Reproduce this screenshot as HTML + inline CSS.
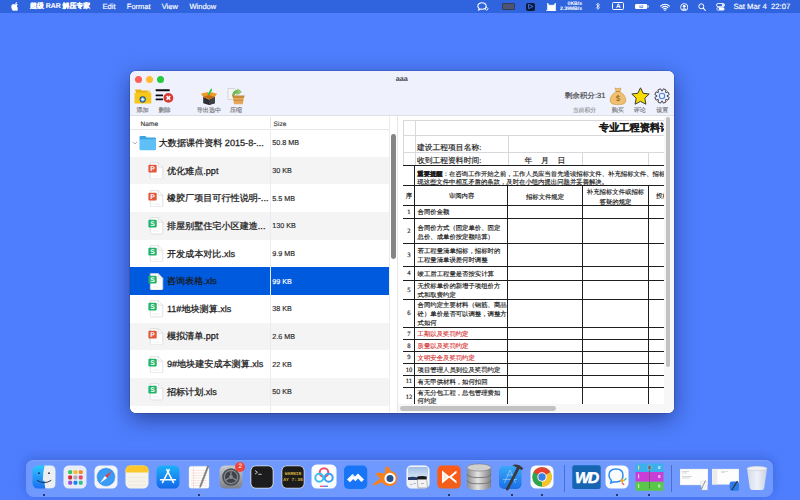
<!DOCTYPE html>
<html><head><meta charset="utf-8">
<style>
*{margin:0;padding:0;box-sizing:border-box}
html,body{width:800px;height:500px;overflow:hidden}
body{background:#4e7efe;font-family:"Liberation Sans",sans-serif;position:relative;text-rendering:geometricPrecision}
.abs{position:absolute}
#menubar{position:absolute;left:0;top:0;width:800px;height:13.4px;background:#2f64de;color:#fff;font-size:8.3px}
#menubar .mi{position:absolute;top:2px;line-height:9px;white-space:nowrap;-webkit-text-stroke:.15px #fff}
#win{position:absolute;left:130px;top:71px;width:544px;height:341.6px;border-radius:6px;background:#fff;overflow:hidden;
 box-shadow:0 6px 22px rgba(0,0,40,.45),0 0 0 .5px rgba(0,0,0,.25)}
#toolbar{position:absolute;left:0;top:0;width:544px;height:44.6px;background:#eff2fc;border-bottom:.8px solid #dcdee8;z-index:3}
.tl{position:absolute;top:5px;width:7px;height:7px;border-radius:50%}
#title{position:absolute;left:265.8px;top:2.8px;font-size:7.2px;font-weight:bold;color:#3c3c46}
.tlab{position:absolute;top:35px;font-size:6.1px;color:#75757b;white-space:nowrap;-webkit-text-stroke:.15px #75757b}
#left{position:absolute;left:0;top:44px;width:267.6px;height:297.6px;background:#fff;overflow:hidden}
#hdr{position:absolute;left:0;top:0;width:259px;height:14.5px;border-bottom:.8px solid #e6e6e8;font-size:6.6px;color:#3a3a3e;-webkit-text-stroke:.15px #3a3a3e}
.row{position:absolute;left:0;width:258.6px;height:27.65px}
.row.g{background:#f4f4f5}
.row.sel{background:#005ade}
.nm{position:absolute;left:37px;top:7.8px;font-size:9.1px;color:#1a1a1a;white-space:nowrap;-webkit-text-stroke:.25px #1a1a1a}
.sz{position:absolute;left:142.3px;top:9.3px;font-size:7.2px;color:#2a2a2a;white-space:nowrap;-webkit-text-stroke:.15px #2a2a2a}
.sel .sz{color:#fff;-webkit-text-stroke:.15px #fff}
#right{position:absolute;left:267.6px;top:44px;width:276.4px;height:297.6px;background:#fff;overflow:hidden}
.sx{position:absolute;font-family:"Liberation Serif",serif;color:#1a1a1a;white-space:nowrap;line-height:1.2;-webkit-text-stroke:.15px #1a1a1a}
#dockbg{position:absolute;left:26px;top:460px;width:747px;height:37px;border-radius:8px;background:rgba(125,165,255,.7);box-shadow:0 -2px 12px rgba(0,20,90,.22),inset 0 .6px 0 rgba(255,255,255,.25)}
</style></head><body>
<div id="menubar">
 <svg class="abs" style="left:10.5px;top:1.8px" width="8" height="9" viewBox="0 0 170 200"><path fill="#fff" d="M150.4 172.3c-8.3 12.4-17.1 24.500-30.500 24.700-13.400.2-17.700-7.900-33-7.900-15.300 0-20.100 7.700-32.800 8.100-13.100.5-23.100-13.200-31.500-25.500C5.500 146.400-7.500 101.100 10 70.800 18.700 55.700 34.200 46.200 51 46c12.800-.2 24.900 8.600 32.800 8.600 7.800 0 19.400-10.700 32.700-9.100 5.600.2 21.200 2.200 31.200 16.900-.8.500-18.600 10.900-18.400 32.500.2 25.800 22.600 34.400 22.900 34.500-.2.600-3.600 12.300-11.800 24.300M101.600 15.500C108.600 7 120.400.7 130.100.2c1.200 11.400-3.300 22.900-10.100 31.100-6.700 8.300-17.800 14.700-28.600 13.900-1.500-11.200 4-22.900 10.200-29.700"/></svg>
 <div class="mi" style="left:30px;font-weight:bold;font-size:6.9px;top:2.4px">超级 RAR 解压专家</div>
 <div class="mi" style="left:102.5px;font-size:7.6px">Edit</div>
 <div class="mi" style="left:126.8px;font-size:7.5px">Format</div>
 <div class="mi" style="left:161.7px;font-size:7.5px">View</div>
 <div class="mi" style="left:189.5px;font-size:7.5px">Window</div>
 <!-- right icons -->
 <svg class="abs" style="left:476.5px;top:2px" width="12" height="9" viewBox="0 0 12 9"><path d="M5 .8C2.6.8.8 2.3.8 4.1c0 1 .5 1.800 1.300 2.400L1.700 8 3.600 7.100c.5.100.9.200 1.400.2 2.400 0 4.200-1.500 4.200-3.300S7.400.8 5 .8z" fill="none" stroke="#fff" stroke-width="1.1"/><path d="M9.6 5.200l1.600 1.600-1.600 1.600-1.600-1.600z" fill="none" stroke="#fff" stroke-width=".9"/></svg>
 <div class="abs" style="left:502px;top:2.5px;width:12.5px;height:7.3px;background:#4d5572;border:.7px solid #353c55;border-radius:1px"></div>
 <div class="abs" style="left:525.6px;top:2.5px;width:9.4px;height:8px;background:#0d1a3a;border-radius:2px"><svg class="abs" style="left:2px;top:1.5px" width="6" height="5" viewBox="0 0 6 5"><path d="M.5.3L5 2.5.5 4.700z" fill="none" stroke="#3f7de8" stroke-width=".9"/></svg></div>
 <svg class="abs" style="left:545.5px;top:2.6px" width="11" height="8" viewBox="0 0 11 8"><path d="M1.500 0 3.200 2.200H7.800L9.500 0V8H1.500zM.500 8H10.500" fill="#fff" stroke="#fff" stroke-width=".6"/><path d="M.800 6.800Q0 7.600.700 8" stroke="#fff" fill="none" stroke-width=".8"/></svg>
 <div class="abs" style="left:552px;top:1.8px;font-size:5.1px;line-height:4.9px;text-align:right;width:30px;color:#fff;font-weight:bold">0KB/s<br>2.39MB/s</div>
 <svg class="abs" style="left:594.5px;top:2.3px" width="6" height="8.5" viewBox="0 0 6 9"><path d="M1 2.300 4.600 6 2.800 7.800V1.200L4.600 3 1 6.700" fill="none" stroke="#fff" stroke-width=".8"/></svg>
 <div class="abs" style="left:612.3px;top:2.4px;width:12px;height:7.8px;border:.9px solid #fff;border-radius:1.5px;color:#fff;font-size:6.3px;line-height:7.4px;text-align:center;font-weight:bold">A</div>
 <svg class="abs" style="left:635px;top:4.2px" width="14" height="5" viewBox="0 0 14 5"><rect x="0" y="0" width="12.2" height="5" rx="1.200" fill="#fff"/><rect x="12.600" y="1.500" width="1" height="2" fill="#fff"/><text x="6" y="4" font-size="3.800" text-anchor="middle" fill="#3166e0" font-family="Liberation Sans" font-weight="bold">52</text></svg>
 <svg class="abs" style="left:660px;top:2.8px" width="10" height="8" viewBox="0 0 10 8"><path d="M.6 3.100A6.200 6.200 0 0 1 9.400 3.100M2.100 4.600A4 4 0 0 1 7.900 4.600M3.600 6A1.900 1.900 0 0 1 6.400 6" fill="none" stroke="#fff" stroke-width="1.100" stroke-linecap="round"/><circle cx="5" cy="7.200" r=".8" fill="#fff"/></svg>
 <svg class="abs" style="left:679.8px;top:2.800px" width="8.400" height="8.400" viewBox="0 0 10 10"><circle cx="5" cy="5" r="4.300" fill="none" stroke="#fff" stroke-width="1.100"/><circle cx="5" cy="4" r="1.700" fill="#fff"/><path d="M2 8Q5 4.800 8 8" fill="#fff"/></svg>
 <svg class="abs" style="left:697.5px;top:3px" width="8" height="8" viewBox="0 0 8 8"><circle cx="3.300" cy="3.300" r="2.500" fill="none" stroke="#fff" stroke-width="1"/><path d="M5.200 5.200 7.300 7.300" stroke="#fff" stroke-width="1.100" stroke-linecap="round"/></svg>
 <svg class="abs" style="left:715.5px;top:2.500px" width="9" height="8" viewBox="0 0 9 8"><rect x=".5" y=".5" width="8" height="3.200" rx="1.600" fill="none" stroke="#fff" stroke-width=".9"/><circle cx="6.900" cy="2.100" r="1.100" fill="#fff"/><rect x=".5" y="4.300" width="8" height="3.200" rx="1.600" fill="#fff"/><circle cx="2.100" cy="5.900" r="1" fill="#3166e0"/></svg>
 <div class="mi" style="left:733.4px;font-size:7.7px;white-space:pre">Sat Mar 4  22:07</div>
</div>
<div id="win">
 <div id="toolbar">
  <div class="tl" style="left:4.5px;background:#fe5f57"></div>
  <div class="tl" style="left:15.5px;background:#febc2e"></div>
  <div class="tl" style="left:26.5px;background:#28c840"></div>
  <div id="title">aaa</div>
  <svg class="abs" style="left:3.5px;top:16.5px" width="18" height="16" viewBox="0 0 18 16">
   <path d="M1 2.300Q1 1.500 1.800 1.500H6.500L7.600 2.600H15.500V5H1z" fill="#e8b10e"/>
   <path d="M.5 4.500H16.800Q17.300 4.500 17.300 5V15Q17.300 15.600 16.700 15.600H1.100Q.5 15.600 .5 15z" fill="#f7c81c"/>
   <path d="M1.500 2.800V5.200M14.200 2.600V4.600" stroke="#f4f0e0" stroke-width=".9"/>
   <circle cx="8.700" cy="11.400" r="3.100" fill="#21477a"/>
   <circle cx="8.700" cy="11.400" r="2.200" fill="#6ab7f2"/>
   <path d="M8.700 9.900V12.900M7.200 11.400H10.200" stroke="#fff" stroke-width=".9"/>
  </svg>
  <svg class="abs" style="left:25px;top:17px" width="19" height="15" viewBox="0 0 19 15">
   <rect x=".6" y="1.300" width="14.200" height="1.900" rx=".6" fill="#0c0c0c"/>
   <rect x=".6" y="6.400" width="7.500" height="1.900" rx=".6" fill="#0c0c0c"/>
   <rect x=".6" y="10.400" width="7.500" height="1.900" rx=".6" fill="#0c0c0c"/>
   <circle cx="13.400" cy="9.900" r="4.900" fill="#d93a35"/>
   <path d="M11.600 8.100 15.200 11.700M15.200 8.100 11.600 11.700" stroke="#fff" stroke-width="1.500"/>
  </svg>
  <svg class="abs" style="left:69.5px;top:15.5px" width="18" height="18" viewBox="0 0 18 18">
   <path d="M3.200 9.800 9 12.500 14.800 9.800V16.200L9 18 3.200 16.200z" fill="#2c2f33"/>
   <path d="M9 12.500V18L14.800 16.200V9.800z" fill="#3d4046"/>
   <path d="M.8 6.700 7.500 5 9 6.500 10.500 5 17.200 6.700 14.800 9.800 9 12.500 3.200 9.800z" fill="#f09a2a"/>
   <path d="M3.200 9.800 9 12.500 14.800 9.800 9 8z" fill="#c56c14"/>
   <path d="M7.600 7.500 10.400 2.400 11.800 1.200 12 3 9.400 8.200z" fill="#2fc24a"/>
   <path d="M10.400 2.400 11.800 1.200" stroke="#9ef0a8" stroke-width=".7"/>
  </svg>
  <svg class="abs" style="left:97px;top:16px" width="19" height="18" viewBox="0 0 19 18">
   <path d="M1 1.500H7.500L9.500 3.500V12.500H1z" fill="#f5f5f2" stroke="#c8c8c8" stroke-width=".7"/>
   <path d="M5 9Q5.500 2.500 11.500 2.800L13.800 4.500 12 7Q8.500 5.500 7 9z" fill="#73b55a"/>
   <path d="M10.500 1.200 15 5 10.300 8.200z" fill="#8cc86e"/>
   <path d="M5 8.500H17.800L16.800 11H6z" fill="#c98a3a"/>
   <path d="M6 11H16.800L15.800 17.300H7z" fill="#e5a85a"/>
   <path d="M6.500 13.300H16.200" stroke="#b97c2e" stroke-width=".7"/>
  </svg>
  <div class="tlab" style="left:6.5px">添加</div>
  <div class="tlab" style="left:28.5px">删除</div>
  <div class="tlab" style="left:66.7px">导出选中</div>
  <div class="tlab" style="left:100px">压缩</div>
  <div class="abs" style="left:434.7px;top:20.3px;font-size:7.55px;color:#4a4a50;white-space:nowrap;-webkit-text-stroke:.2px #4a4a50">剩余积分:31</div>
  <div class="tlab" style="left:442.7px;font-size:5.9px;color:#8a8a90;-webkit-text-stroke:.1px #8a8a90">当前积分</div>
  <svg class="abs" style="left:478.5px;top:15.8px" width="18" height="18" viewBox="0 0 18 18">
   <path d="M6 1Q9 2.200 12 1L11 4.500H7z" fill="#f0c070" stroke="#c89848" stroke-width=".6"/>
   <path d="M7 4.500H11Q17.500 9 16.800 14Q16.300 17.400 12 17.500H6Q1.700 17.400 1.200 14Q.5 9 7 4.500z" fill="#f0c070" stroke="#c89848" stroke-width=".6"/>
   <path d="M7 4.500H11" stroke="#b88838" stroke-width=".9"/>
   <text x="9" y="14.300" font-size="8" text-anchor="middle" fill="#8a5a1a" font-family="Liberation Sans">$</text>
  </svg>
  <svg class="abs" style="left:500.5px;top:16px" width="19" height="18" viewBox="0 0 19 18">
   <path d="M9.500 .8 12.200 6.300 18.200 7 13.800 11.200 14.900 17.200 9.500 14.300 4.100 17.200 5.200 11.200.8 7 6.800 6.300z" fill="#fbdc00" stroke="#3a3a3a" stroke-width="1" stroke-linejoin="round"/>
  </svg>
  <svg class="abs" style="left:524.3px;top:16.6px" width="16" height="16" viewBox="0 0 16 16">
   <path d="M13.09 8.32 L15.18 9.33 L14.01 12.14 L11.83 11.37 L11.37 11.83 L12.14 14.01 L9.33 15.18 L8.32 13.09 L7.68 13.09 L6.67 15.18 L3.86 14.01 L4.63 11.83 L4.17 11.37 L1.99 12.14 L0.82 9.33 L2.91 8.32 L2.91 7.68 L0.82 6.67 L1.99 3.86 L4.17 4.63 L4.63 4.17 L3.86 1.99 L6.67 0.82 L7.68 2.91 L8.32 2.91 L9.33 0.82 L12.14 1.99 L11.37 4.17 L11.83 4.63 L14.01 3.86 L15.18 6.67 L13.09 7.68z" fill="none" stroke="#46464a" stroke-width="1" stroke-linejoin="round"/>
   <circle cx="8" cy="8" r="2.700" fill="none" stroke="#4a88ea" stroke-width="1.100"/>
  </svg>
  <div class="tlab" style="left:481.7px">购买</div>
  <div class="tlab" style="left:503.7px">评论</div>
  <div class="tlab" style="left:526.2px">设置</div>
 </div>
 <div id="left">
  <div id="hdr"><div class="abs" style="left:10.6px;top:5.9px">Name</div><div class="abs" style="left:143.6px;top:5.9px">Size</div><div class="abs" style="left:140px;top:2px;width:.8px;height:11px;background:#e4e4e6"></div></div>
  <div class="abs" style="left:140px;top:13.8px;width:.8px;height:290px;background:#ececee;z-index:1"></div>
  <div class="row" style="top:14.15px"><svg class="abs" style="left:2px;top:11.5px" width="6" height="4" viewBox="0 0 6 4"><path d="M.8.8 3 3 5.200.8" fill="none" stroke="#a0a0a6" stroke-width=".8"/></svg><svg class="abs" style="left:9px;top:5.5px" width="17.5" height="16" viewBox="0 0 17.5 16"><path d="M.5 2.300Q.5 1 1.800 1H6.300L7.800 2.500H15.700Q17 2.500 17 3.800V5H.5z" fill="#3aa4e0"/><path d="M.5 4.300H17V14.200Q17 15.300 15.800 15.300H1.700Q.5 15.300 .5 14.200z" fill="#5ec0f6"/></svg><div class="nm" style="left:28.7px">大数据课件资料 2015-8-...</div><div class="sz">50.8 MB</div></div>
  <div class="row g" style="top:41.80px"><svg class="abs" style="left:18px;top:5.2px" width="15.5" height="17.5" viewBox="0 0 15.5 17.5"><path d="M2.300.6H10.200L14.800 5.200V15.600Q14.800 16.900 13.500 16.900H3.500Q2.300 16.900 2.300 15.600z" fill="#fff" stroke="#d6d6d8" stroke-width=".7"/><path d="M10.200.6V4Q10.200 5.200 11.400 5.200H14.800" fill="none" stroke="#d6d6d8" stroke-width=".7"/><path d="M5 14H11.500" stroke="#e4e4e6" stroke-width=".6"/><rect x=".4" y="2.700" width="8.300" height="7.800" rx="1" fill="#e2583a"/><text x="4.550" y="9" font-size="6.800" font-weight="bold" text-anchor="middle" fill="#fff" font-family="Liberation Sans">P</text></svg><div class="nm" style="left:36.9px">优化难点.ppt</div><div class="sz">30 KB</div></div>
  <div class="row" style="top:69.45px"><svg class="abs" style="left:18px;top:5.2px" width="15.5" height="17.5" viewBox="0 0 15.5 17.5"><path d="M2.300.6H10.200L14.800 5.200V15.600Q14.800 16.900 13.500 16.900H3.500Q2.300 16.900 2.300 15.600z" fill="#fff" stroke="#d6d6d8" stroke-width=".7"/><path d="M10.200.6V4Q10.200 5.200 11.400 5.200H14.800" fill="none" stroke="#d6d6d8" stroke-width=".7"/><path d="M5 14H11.500" stroke="#e4e4e6" stroke-width=".6"/><rect x=".4" y="2.700" width="8.300" height="7.800" rx="1" fill="#e2583a"/><text x="4.550" y="9" font-size="6.800" font-weight="bold" text-anchor="middle" fill="#fff" font-family="Liberation Sans">P</text></svg><div class="nm" style="left:36.9px">橡胶厂项目可行性说明-...</div><div class="sz">5.5 MB</div></div>
  <div class="row g" style="top:97.10px"><svg class="abs" style="left:18px;top:5.2px" width="15.5" height="17.5" viewBox="0 0 15.5 17.5"><path d="M2.300.6H10.200L14.800 5.200V15.600Q14.800 16.900 13.500 16.900H3.500Q2.300 16.900 2.300 15.600z" fill="#fff" stroke="#d6d6d8" stroke-width=".7"/><path d="M10.200.6V4Q10.200 5.200 11.400 5.200H14.800" fill="none" stroke="#d6d6d8" stroke-width=".7"/><path d="M5 14H11.500" stroke="#e4e4e6" stroke-width=".6"/><rect x=".4" y="2.700" width="8.300" height="7.800" rx="1" fill="#22b26a"/><text x="4.550" y="9" font-size="6.800" font-weight="bold" text-anchor="middle" fill="#fff" font-family="Liberation Sans">S</text></svg><div class="nm" style="left:36.9px">排屋别墅住宅小区建造...</div><div class="sz">130 KB</div></div>
  <div class="row" style="top:124.75px"><svg class="abs" style="left:18px;top:5.2px" width="15.5" height="17.5" viewBox="0 0 15.5 17.5"><path d="M2.300.6H10.200L14.800 5.200V15.600Q14.800 16.900 13.500 16.900H3.500Q2.300 16.900 2.300 15.600z" fill="#fff" stroke="#d6d6d8" stroke-width=".7"/><path d="M10.200.6V4Q10.200 5.200 11.400 5.200H14.800" fill="none" stroke="#d6d6d8" stroke-width=".7"/><path d="M5 14H11.500" stroke="#e4e4e6" stroke-width=".6"/><rect x=".4" y="2.700" width="8.300" height="7.800" rx="1" fill="#22b26a"/><text x="4.550" y="9" font-size="6.800" font-weight="bold" text-anchor="middle" fill="#fff" font-family="Liberation Sans">S</text></svg><div class="nm" style="left:36.9px">开发成本对比.xls</div><div class="sz">9.9 MB</div></div>
  <div class="row sel" style="top:152.40px"><svg class="abs" style="left:18px;top:5.2px" width="15.5" height="17.5" viewBox="0 0 15.5 17.5"><path d="M2.300.6H10.200L14.800 5.200V15.600Q14.800 16.900 13.500 16.900H3.500Q2.300 16.900 2.300 15.600z" fill="#fff" stroke="#d6d6d8" stroke-width=".7"/><path d="M10.200.6V4Q10.200 5.200 11.400 5.200H14.800" fill="none" stroke="#d6d6d8" stroke-width=".7"/><path d="M5 14H11.500" stroke="#e4e4e6" stroke-width=".6"/><rect x=".4" y="2.700" width="8.300" height="7.800" rx="1" fill="#22b26a"/><text x="4.550" y="9" font-size="6.800" font-weight="bold" text-anchor="middle" fill="#fff" font-family="Liberation Sans">S</text></svg><div class="nm" style="left:36.9px">咨询表格.xls</div><div class="sz">99 KB</div></div>
  <div class="row" style="top:180.05px"><svg class="abs" style="left:18px;top:5.2px" width="15.5" height="17.5" viewBox="0 0 15.5 17.5"><path d="M2.300.6H10.200L14.800 5.200V15.600Q14.800 16.900 13.500 16.900H3.500Q2.300 16.900 2.300 15.600z" fill="#fff" stroke="#d6d6d8" stroke-width=".7"/><path d="M10.200.6V4Q10.200 5.200 11.400 5.200H14.800" fill="none" stroke="#d6d6d8" stroke-width=".7"/><path d="M5 14H11.500" stroke="#e4e4e6" stroke-width=".6"/><rect x=".4" y="2.700" width="8.300" height="7.800" rx="1" fill="#22b26a"/><text x="4.550" y="9" font-size="6.800" font-weight="bold" text-anchor="middle" fill="#fff" font-family="Liberation Sans">S</text></svg><div class="nm" style="left:36.9px">11#地块测算.xls</div><div class="sz">38 KB</div></div>
  <div class="row g" style="top:207.70px"><svg class="abs" style="left:18px;top:5.2px" width="15.5" height="17.5" viewBox="0 0 15.5 17.5"><path d="M2.300.6H10.200L14.800 5.200V15.600Q14.800 16.900 13.500 16.900H3.500Q2.300 16.900 2.300 15.600z" fill="#fff" stroke="#d6d6d8" stroke-width=".7"/><path d="M10.200.6V4Q10.200 5.200 11.400 5.200H14.800" fill="none" stroke="#d6d6d8" stroke-width=".7"/><path d="M5 14H11.500" stroke="#e4e4e6" stroke-width=".6"/><rect x=".4" y="2.700" width="8.300" height="7.800" rx="1" fill="#e2583a"/><text x="4.550" y="9" font-size="6.800" font-weight="bold" text-anchor="middle" fill="#fff" font-family="Liberation Sans">P</text></svg><div class="nm" style="left:36.9px">模拟清单.ppt</div><div class="sz">2.6 MB</div></div>
  <div class="row" style="top:235.35px"><svg class="abs" style="left:18px;top:5.2px" width="15.5" height="17.5" viewBox="0 0 15.5 17.5"><path d="M2.300.6H10.200L14.800 5.200V15.600Q14.800 16.900 13.500 16.900H3.500Q2.300 16.900 2.300 15.600z" fill="#fff" stroke="#d6d6d8" stroke-width=".7"/><path d="M10.200.6V4Q10.200 5.200 11.400 5.200H14.800" fill="none" stroke="#d6d6d8" stroke-width=".7"/><path d="M5 14H11.500" stroke="#e4e4e6" stroke-width=".6"/><rect x=".4" y="2.700" width="8.300" height="7.800" rx="1" fill="#22b26a"/><text x="4.550" y="9" font-size="6.800" font-weight="bold" text-anchor="middle" fill="#fff" font-family="Liberation Sans">S</text></svg><div class="nm" style="left:36.9px">9#地块建安成本测算.xls</div><div class="sz">22 KB</div></div>
  <div class="row g" style="top:263.00px"><svg class="abs" style="left:18px;top:5.2px" width="15.5" height="17.5" viewBox="0 0 15.5 17.5"><path d="M2.300.6H10.200L14.800 5.200V15.600Q14.800 16.900 13.500 16.900H3.500Q2.300 16.900 2.300 15.600z" fill="#fff" stroke="#d6d6d8" stroke-width=".7"/><path d="M10.200.6V4Q10.200 5.200 11.400 5.200H14.800" fill="none" stroke="#d6d6d8" stroke-width=".7"/><path d="M5 14H11.500" stroke="#e4e4e6" stroke-width=".6"/><rect x=".4" y="2.700" width="8.300" height="7.800" rx="1" fill="#22b26a"/><text x="4.550" y="9" font-size="6.800" font-weight="bold" text-anchor="middle" fill="#fff" font-family="Liberation Sans">S</text></svg><div class="nm" style="left:36.9px">招标计划.xls</div><div class="sz">50 KB</div></div>
  <div class="row" style="top:290.65px"></div>
  <div class="abs" style="left:258.6px;top:0;width:.7px;height:297px;background:#ececee"></div>
  <div class="abs" style="left:260.8px;top:18.6px;width:4.8px;height:125.2px;border-radius:2.4px;background:#858587"></div>
 </div>
 <div class="abs" style="left:266.6px;top:44px;width:.8px;height:297px;background:#e6e6e8;z-index:2"></div>
 <div id="right">
  <div id="sheet" class="abs" style="left:5.4px;top:5.1px;width:261px;height:283.6px;overflow:hidden"><div class="abs" style="left:0px;top:-0.40px;width:300.00px;height:0.8px;background:#d8d8dc"></div>
<div class="abs" style="left:0px;top:14.90px;width:300.00px;height:0.8px;background:#d8d8dc"></div>
<div class="abs" style="left:0px;top:32.00px;width:300.00px;height:0.8px;background:#d8d8dc"></div>
<div class="abs" style="left:-0.40px;top:0px;width:0.8px;height:45.90px;background:#d8d8dc"></div>
<div class="abs" style="left:11.60px;top:0px;width:0.8px;height:45.90px;background:#d8d8dc"></div>
<div class="abs" style="left:104.60px;top:15.3px;width:0.8px;height:30.60px;background:#d8d8dc"></div>
<div class="abs" style="left:179.20px;top:32.4px;width:0.8px;height:13.50px;background:#d8d8dc"></div>
<div class="abs" style="left:244.80px;top:32.4px;width:0.8px;height:13.50px;background:#d8d8dc"></div>
<div class="abs" style="left:0px;top:45.40px;width:300.00px;height:1px;background:#1e1e1e"></div>
<div class="abs" style="left:0px;top:65.40px;width:300.00px;height:1px;background:#1e1e1e"></div>
<div class="abs" style="left:0px;top:84.50px;width:300.00px;height:1px;background:#1e1e1e"></div>
<div class="abs" style="left:0px;top:97.80px;width:300.00px;height:1px;background:#1e1e1e"></div>
<div class="abs" style="left:0px;top:123.40px;width:300.00px;height:1px;background:#1e1e1e"></div>
<div class="abs" style="left:0px;top:145.80px;width:300.00px;height:1px;background:#1e1e1e"></div>
<div class="abs" style="left:0px;top:159.80px;width:300.00px;height:1px;background:#1e1e1e"></div>
<div class="abs" style="left:0px;top:178.50px;width:300.00px;height:1px;background:#1e1e1e"></div>
<div class="abs" style="left:0px;top:207.00px;width:300.00px;height:1px;background:#1e1e1e"></div>
<div class="abs" style="left:0px;top:219.20px;width:300.00px;height:1px;background:#1e1e1e"></div>
<div class="abs" style="left:0px;top:230.80px;width:300.00px;height:1px;background:#1e1e1e"></div>
<div class="abs" style="left:0px;top:242.90px;width:300.00px;height:1px;background:#1e1e1e"></div>
<div class="abs" style="left:0px;top:254.90px;width:300.00px;height:1px;background:#1e1e1e"></div>
<div class="abs" style="left:0px;top:266.80px;width:300.00px;height:1px;background:#1e1e1e"></div>
<div class="abs" style="left:-0.50px;top:45.9px;width:1px;height:254.10px;background:#1e1e1e"></div>
<div class="abs" style="left:11.50px;top:45.9px;width:1px;height:254.10px;background:#1e1e1e"></div>
<div class="abs" style="left:104.50px;top:65.9px;width:1px;height:234.10px;background:#1e1e1e"></div>
<div class="abs" style="left:179.10px;top:65.9px;width:1px;height:234.10px;background:#1e1e1e"></div>
<div class="abs" style="left:244.70px;top:65.9px;width:1px;height:234.10px;background:#1e1e1e"></div>
<div class="sx" style="left:196px;top:2.68px;font-size:10.2px;font-weight:bold">专业工程资料计划表</div>
<div class="sx" style="left:13.9px;top:22.52px;font-size:7.8px;">建设工程项目名称:</div>
<div class="sx" style="left:13.9px;top:36.22px;font-size:7.8px;">收到工程资料时间:</div>
<div class="sx" style="left:121.6px;top:36.3px;font-size:7.8px;letter-spacing:8.7px">年月日</div>
<div class="sx" style="left:14.3px;top:50.68px;font-size:6.36px;"><b>重要提醒</b>：在咨询工作开始之前，工作人员应当首先通读招标文件、补充招标文件、招标答疑</div>
<div class="sx" style="left:14.3px;top:58.88px;font-size:6.36px;">现这些文件中相互矛盾的条款，及时在小组内提出问题并妥善解决。</div>
<div class="sx" style="left:-54px;width:120px;text-align:center;top:73.18px;font-size:6.36px;">序</div>
<div class="sx" style="left:-1.3999999999999986px;width:120px;text-align:center;top:73.18px;font-size:6.36px;">审阅内容</div>
<div class="sx" style="left:82px;width:120px;text-align:center;top:73.48px;font-size:6.36px;">招标文件规定</div>
<div class="sx" style="left:152.5px;width:120px;text-align:center;top:69.08px;font-size:6.36px;">补充招标文件或招标</div>
<div class="sx" style="left:152.5px;width:120px;text-align:center;top:78.48px;font-size:6.36px;">答疑的规定</div>
<div class="sx" style="left:253.2px;top:73.18px;font-size:6.36px;">投标文件</div>
<div class="sx" style="left:-54px;width:120px;text-align:center;top:88.69px;font-size:6.6px;">1</div>
<div class="sx" style="left:14.6px;top:89.13px;font-size:6.36px;">合同价金额</div>
<div class="sx" style="left:-54px;width:120px;text-align:center;top:108.14px;font-size:6.6px;">2</div>
<div class="sx" style="left:14.6px;top:105.18px;font-size:6.36px;">合同价方式（固定单价、固定</div>
<div class="sx" style="left:14.6px;top:113.98px;font-size:6.36px;">总价、成单价按定额结算）</div>
<div class="sx" style="left:-54px;width:120px;text-align:center;top:132.14px;font-size:6.6px;">3</div>
<div class="sx" style="left:14.6px;top:128.18px;font-size:6.36px;">若工程量清单招标，招标时的</div>
<div class="sx" style="left:14.6px;top:136.98px;font-size:6.36px;">工程量清单误差何时调整</div>
<div class="sx" style="left:-54px;width:120px;text-align:center;top:150.34px;font-size:6.6px;">4</div>
<div class="sx" style="left:14.6px;top:150.78px;font-size:6.36px;">竣工后工程量是否按实计算</div>
<div class="sx" style="left:-54px;width:120px;text-align:center;top:166.69px;font-size:6.6px;">5</div>
<div class="sx" style="left:14.6px;top:162.73px;font-size:6.36px;">无投标单价的新增子项组价方</div>
<div class="sx" style="left:14.6px;top:171.53px;font-size:6.36px;">式和取费约定</div>
<div class="sx" style="left:-54px;width:120px;text-align:center;top:190.29px;font-size:6.6px;">6</div>
<div class="sx" style="left:14.6px;top:181.93px;font-size:6.36px;">合同约定主要材料（钢筋、商品</div>
<div class="sx" style="left:14.6px;top:190.73px;font-size:6.36px;">砼）单价是否可以调整，调整方</div>
<div class="sx" style="left:14.6px;top:199.53px;font-size:6.36px;">式如何</div>
<div class="sx" style="left:-54px;width:120px;text-align:center;top:210.64px;font-size:6.6px;">7</div>
<div class="sx" style="left:14.6px;top:211.08px;font-size:6.36px;color:#d42a2a;-webkit-text-stroke:.12px #d42a2a">工期以及奖罚约定</div>
<div class="sx" style="left:-54px;width:120px;text-align:center;top:222.54px;font-size:6.6px;">8</div>
<div class="sx" style="left:14.6px;top:222.98px;font-size:6.36px;color:#d42a2a;-webkit-text-stroke:.12px #d42a2a">质量以及奖罚约定</div>
<div class="sx" style="left:-54px;width:120px;text-align:center;top:234.39px;font-size:6.6px;">9</div>
<div class="sx" style="left:14.6px;top:234.83px;font-size:6.36px;color:#d42a2a;-webkit-text-stroke:.12px #d42a2a">文明安全及奖罚约定</div>
<div class="sx" style="left:-54px;width:120px;text-align:center;top:246.44px;font-size:6.6px;">10</div>
<div class="sx" style="left:14.6px;top:246.88px;font-size:6.36px;">项目管理人员到位及奖罚约定</div>
<div class="sx" style="left:-54px;width:120px;text-align:center;top:258.39px;font-size:6.6px;">11</div>
<div class="sx" style="left:14.6px;top:258.83px;font-size:6.36px;">有无甲供材料，如何扣回</div>
<div class="sx" style="left:-54px;width:120px;text-align:center;top:273.54px;font-size:6.6px;">12</div>
<div class="sx" style="left:14.6px;top:269.58px;font-size:6.36px;">有无分包工程，总包管理费如</div>
<div class="sx" style="left:14.6px;top:278.38px;font-size:6.36px;">何约定</div></div>
  <div class="abs" style="left:266.6px;top:0;width:10px;height:297px;background:#f7f7f7"></div>
  <div class="abs" style="left:268.6px;top:2px;width:3.6px;height:249.7px;border-radius:1.8px;background:#c2c2c2"></div>
  <div class="abs" style="left:0;top:288.7px;width:266.6px;height:8.3px;background:#f7f7f7"></div>
  <div class="abs" style="left:2.4px;top:291.2px;width:156.2px;height:4.8px;border-radius:2.4px;background:#c2c2c2"></div>
 </div>
</div>
<div id="dockbg"></div>
<div id="dock">
<svg class="abs" style="left:31.5px;top:465px" width="24" height="24" viewBox="0 0 24 24"><defs><linearGradient id="fg1" x1="0" y1="0" x2="0" y2="1"><stop offset="0" stop-color="#2ec5ff"/><stop offset="1" stop-color="#1a6ff0"/></linearGradient></defs>
<rect x="0.5" y="0.5" width="23" height="23" rx="5.2" fill="url(#fg1)"/>
<path d="M12.6 .5H18.300Q23.500 .5 23.500 5.700V18.300Q23.500 23.500 18.300 23.500H13.300Q12.400 19 12.500 15.800H10.800Q10.800 8 12.600 .5z" fill="#eceef2"/>
<circle cx="7" cy="8.200" r=".9" fill="#1b2a3a"/><circle cx="17" cy="8.200" r=".9" fill="#1b2a3a"/>
<path d="M5 15.300Q12 20 19.300 15.300" fill="none" stroke="#1b2a3a" stroke-width=".9"/></svg>
<div class="abs" style="left:42.50px;top:493.5px;width:2px;height:2px;border-radius:1px;background:#0f1a3a"></div>
<svg class="abs" style="left:62.7px;top:465px" width="24" height="24" viewBox="0 0 24 24"><rect x="0.5" y="0.5" width="23" height="23" rx="5.2" fill="#e8ecf6"/><rect x="5.2" y="5.2" width="3.9" height="3.9" rx="1.1" fill="#34c759"/><rect x="10.5" y="5.2" width="3.9" height="3.9" rx="1.1" fill="#f5b82e"/><rect x="15.8" y="5.2" width="3.9" height="3.9" rx="1.1" fill="#f08a24"/><rect x="5.2" y="10.5" width="3.9" height="3.9" rx="1.1" fill="#d9252e"/><rect x="10.5" y="10.5" width="3.9" height="3.9" rx="1.1" fill="#a9adb5"/><rect x="15.8" y="10.5" width="3.9" height="3.9" rx="1.1" fill="#e94564"/><rect x="5.2" y="15.8" width="3.9" height="3.9" rx="1.1" fill="#9b4fd8"/><rect x="10.5" y="15.8" width="3.9" height="3.9" rx="1.1" fill="#1b84ef"/><rect x="15.8" y="15.8" width="3.9" height="3.9" rx="1.1" fill="#2fc28e"/></svg>
<svg class="abs" style="left:93.8px;top:465px" width="24" height="24" viewBox="0 0 24 24"><rect x="0.5" y="0.5" width="23" height="23" rx="5.2" fill="#f4f5f8"/>
<circle cx="12" cy="12" r="9.300" fill="#2a8ef0" stroke="#d8dde6" stroke-width=".6"/>
<circle cx="12" cy="12" r="8" fill="#3a9cf4"/>
<path d="M18.200 5.800 13.100 13.100 10.900 10.900z" fill="#ee3b3b"/><path d="M5.800 18.200 10.900 10.900 13.100 13.100z" fill="#fff"/></svg>
<svg class="abs" style="left:125px;top:465px" width="24" height="24" viewBox="0 0 24 24"><rect x="0.5" y="0.5" width="23" height="23" rx="5.2" fill="#f6f3ea"/>
<path d="M.5 5.700Q.5 .5 5.700 .5H18.300Q23.500 .5 23.500 5.700V7.500H.5z" fill="#fdc82c"/>
<path d="M3 12.300H21M3 16.300H21M3 20.200H21" stroke="#e3ded2" stroke-width=".5"/></svg>
<svg class="abs" style="left:156.2px;top:465px" width="24" height="24" viewBox="0 0 24 24"><defs><linearGradient id="as1" x1="0" y1="0" x2="0" y2="1"><stop offset="0" stop-color="#1cb0fa"/><stop offset="1" stop-color="#1468e6"/></linearGradient></defs>
<rect x="0.5" y="0.5" width="23" height="23" rx="5.2" fill="url(#as1)"/>
<path d="M13.200 4.600 6.500 17.600M10.800 4.600 17.500 17.600M4.600 14.700H19.400" stroke="#fff" stroke-width="1.500" stroke-linecap="round"/></svg>
<svg class="abs" style="left:187px;top:465px" width="24" height="24" viewBox="0 0 24 24"><rect x="2" y="1.200" width="20" height="22" rx="2" fill="#fdfdfb" stroke="#d8d8d8" stroke-width=".4"/>
<path d="M4 5.500H20M4 8H20M4 10.500H20M4 13H20M4 15.500H20M4 18H20M4 20.500H20" stroke="#f0b8b8" stroke-width=".35"/>
<path d="M6.500 1.200V23" stroke="#f0b8b8" stroke-width=".35"/>
<path d="M20.500 .8 21.800 1.600 14 21.500 12.800 22.600 12.900 20.800z" fill="#8a8a8a" stroke="#555" stroke-width=".4"/></svg>
<div class="abs" style="left:198.00px;top:493.5px;width:2px;height:2px;border-radius:1px;background:#0f1a3a"></div>
<svg class="abs" style="left:218.6px;top:465px" width="24" height="24" viewBox="0 0 24 24"><defs><linearGradient id="sp1" x1="0" y1="0" x2="0" y2="1"><stop offset="0" stop-color="#c8cbd0"/><stop offset="1" stop-color="#7d8086"/></linearGradient></defs>
<rect x="0.5" y="0.5" width="23" height="23" rx="5.2" fill="url(#sp1)"/>
<circle cx="12" cy="12" r="8.800" fill="#4c4f55"/><circle cx="12" cy="12" r="7.200" fill="#888b90"/><circle cx="12" cy="12" r="6" fill="#3e4146"/>
<circle cx="12" cy="12" r="2" fill="#888b90"/><path d="M12 10V6.300M10.300 13 7 14.900M13.700 13 17 14.900" stroke="#888b90" stroke-width="1.300"/></svg>
<svg class="abs" style="left:249.6px;top:465px" width="24" height="24" viewBox="0 0 24 24"><rect x="0.5" y="0.5" width="23" height="23" rx="5.2" fill="#e8e8e8"/>
<rect x="1.300" y="1.300" width="21.400" height="21.400" rx="4.500" fill="#1c1c1e"/>
<path d="M5 5.500 7.500 7.300 5 9.100M8.300 9.300H11.600" stroke="#f0f0f0" stroke-width=".8" fill="none"/></svg>
<svg class="abs" style="left:281px;top:465px" width="24" height="24" viewBox="0 0 24 24"><rect x="0.5" y="0.5" width="23" height="23" rx="5.2" fill="#d8d8d8"/>
<rect x="1.300" y="1.300" width="21.400" height="21.400" rx="4.500" fill="#1c1c1a"/>
<text x="12" y="10.300" font-size="4.600" text-anchor="middle" fill="#d8b040" font-family="Liberation Mono" font-weight="bold">WARNIN</text>
<text x="12" y="16" font-size="4.600" text-anchor="middle" fill="#d8b040" font-family="Liberation Mono" font-weight="bold">AY 7:36</text></svg>
<svg class="abs" style="left:311.3px;top:464px" width="26" height="25" viewBox="0 0 26 25"><rect x="0.5" y="0.5" width="25" height="24" rx="5.2" fill="#fbfcfe"/>
<circle cx="13" cy="8.500" r="4.300" fill="none" stroke="#e94e6a" stroke-width="2"/>
<circle cx="8.300" cy="13.800" r="4" fill="none" stroke="#3cc3f0" stroke-width="2"/>
<circle cx="17.700" cy="13.800" r="4" fill="none" stroke="#3aa0f0" stroke-width="2"/>
<rect x="9" y="21.600" width="4" height="1.300" fill="#e94e6a"/><rect x="13" y="21.600" width="4" height="1.300" fill="#3a80f0"/></svg>
<svg class="abs" style="left:343.5px;top:465px" width="24" height="24" viewBox="0 0 24 24"><rect x="0" y="0.6" width="23.2" height="23.3" rx="4.5" fill="#1876f6"/>
<path d="M3 14.600 8.600 9 11 11.400 14 8.400 20 14.400 17.400 17 14 13.600 11.400 16.200 9.200 14 6 17.200z" fill="#fff"/>
<path d="M8.600 9 11 11.400 9.800 12.600 7.600 10z" fill="#cfe2ff"/></svg>
<svg class="abs" style="left:371.8px;top:464px" width="26" height="24" viewBox="0 0 26 24"><path d="M14.500 2.600Q16 2.400 17 3.600L18.800 6.800Q25.500 8.500 25.200 14.800Q24.800 21.500 18 22Q12.500 22.200 10.500 18.200L2.200 21.400Q.3 21.800 .8 20.200L8.300 14.200 4.800 11.800Q3.500 10.800 4.300 9.200Q4.900 8.300 6.300 8.500L12.800 9.500 13.300 4.300Q13.600 2.800 14.500 2.600z" fill="#f5821f"/>
<circle cx="18" cy="14.400" r="5.600" fill="#fff"/><circle cx="18" cy="14.400" r="3.500" fill="#23508e"/></svg>
<svg class="abs" style="left:405.5px;top:465px" width="24" height="24" viewBox="0 0 24 24"><defs><linearGradient id="pv1" x1="0" y1="0" x2="0" y2="1"><stop offset="0" stop-color="#9fbde6"/><stop offset="1" stop-color="#dfe8f4"/></linearGradient></defs>
<rect x="0.8" y="0.8" width="22.400" height="22.400" rx="4.300" fill="#f8f9fb" stroke="#dfe3ea" stroke-width=".8"/>
<rect x="2" y="2" width="20" height="12" rx="2" fill="url(#pv1)"/>
<path d="M2 12.300Q7 11 12 12.500V15H2z" fill="#2a3b6a"/>
<path d="M2 15H12V21.800H4Q2 21.800 2 20z" fill="#eef1f6"/>
<path d="M4 19.500H6.500M7.500 18.500H10" stroke="#8a94a8" stroke-width=".6"/>
<path d="M11.300 11.500Q16 10.300 20.700 11.500V14.500H11.300z" fill="#161616"/>
<path d="M11.300 14.500H20.700L21.500 23H12z" fill="#f2f2f2" stroke="#555" stroke-width=".4"/>
<path d="M15 18.500H18" stroke="#777" stroke-width=".5"/></svg>
<svg class="abs" style="left:436.5px;top:465px" width="24" height="24" viewBox="0 0 24 24"><defs><linearGradient id="kk1" x1="0" y1="0" x2="0" y2="1"><stop offset="0" stop-color="#ff5a1a"/><stop offset="1" stop-color="#f0601a"/></linearGradient></defs>
<rect x="0.3" y="0.5" width="23.400" height="23" rx="4.500" fill="url(#kk1)"/>
<path d="M5 5.500 13 12 5 18.500z" fill="#fff"/><path d="M19.500 5.500 11.500 12 19.500 18.500 19.500 16 14.700 12 19.500 8z" fill="#fff"/><path d="M6.500 8.500 11 12 6.500 15.500z" fill="#ffe6dc"/></svg>
<div class="abs" style="left:447.50px;top:493.5px;width:2px;height:2px;border-radius:1px;background:#0f1a3a"></div>
<svg class="abs" style="left:466.2px;top:463px" width="26" height="28" viewBox="0 0 26 28"><defs><linearGradient id="db1" x1="0" y1="0" x2="1" y2="0"><stop offset="0" stop-color="#8c8c8c"/><stop offset=".45" stop-color="#e4e4e4"/><stop offset="1" stop-color="#808080"/></linearGradient></defs>
<path d="M1 4.500V23Q1 27 13 27T25 23V4.500z" fill="url(#db1)"/>
<ellipse cx="13" cy="4.500" rx="12" ry="3.600" fill="#d0d0d0" stroke="#7a7a7a" stroke-width=".6"/>
<path d="M1 11Q1 14.600 13 14.600T25 11M1 17.200Q1 20.800 13 20.800T25 17.200" fill="none" stroke="#6a6a6a" stroke-width=".8"/></svg>
<svg class="abs" style="left:499.4px;top:463.6px" width="25" height="27" viewBox="0 0 25 27"><defs><linearGradient id="xc1" x1="0" y1="0" x2="0" y2="1"><stop offset="0" stop-color="#3aa8f8"/><stop offset="1" stop-color="#1a6fe6"/></linearGradient></defs>
<rect x="0" y="2" width="22.500" height="23" rx="4.800" fill="url(#xc1)"/>
<path d="M11 6 5.500 19M11 6 16.500 19M4 15.500H18M7.500 11H14.500" stroke="#a8d8ff" stroke-width=".6" fill="none"/>
<path d="M13.300 1.300Q16.500 -.2 20.800 1.600L24.300 4.300 22.800 6.200 20.500 4.800 9.500 25.800Q8.700 26.800 7.600 26.200T7 24.500L17.800 3.600Q15.500 2.300 13.300 1.300z" fill="#38383e"/></svg>
<div class="abs" style="left:510.90px;top:493.5px;width:2px;height:2px;border-radius:1px;background:#0f1a3a"></div>
<svg class="abs" style="left:530px;top:465px" width="24" height="24" viewBox="0 0 24 24"><rect x="0.5" y="0.5" width="23" height="23" rx="5.2" fill="#fafafa"/>
<circle cx="12" cy="12" r="9.800" fill="#2fa34e"/>
<path d="M12 12 3.510 7.100A9.800 9.800 0 0 1 20.490 7.100z" fill="#e8402f"/>
<path d="M12 12 20.490 7.100A9.800 9.800 0 0 1 12 21.800z" fill="#f8c42a"/>
<circle cx="12" cy="12" r="4.700" fill="#fff"/><circle cx="12" cy="12" r="3.700" fill="#3a7ee8"/></svg>
<div class="abs" style="left:541.00px;top:493.5px;width:2px;height:2px;border-radius:1px;background:#0f1a3a"></div>
<svg class="abs" style="left:572px;top:465px" width="29" height="24" viewBox="0 0 29 24"><rect x="0.3" y="0.3" width="28.4" height="23.7" rx="2" fill="#1565b0"/>
<text x="14.200" y="17.600" font-size="15.500" text-anchor="middle" fill="#fff" font-family="Liberation Sans" font-weight="bold" font-style="italic" letter-spacing="-1.600" stroke="#fff" stroke-width=".5">WD</text></svg>
<svg class="abs" style="left:605.3px;top:465px" width="24" height="24" viewBox="0 0 24 24"><rect x="0.5" y="0.5" width="23" height="23" rx="5.2" fill="#fbfcfe"/>
<path d="M11 4Q4 4 4 10.300Q4 13.500 6.300 15.300L5.800 18 8.800 16.700Q9.800 17 11 17Q18 17 18 10.300Q18 4 11 4z" fill="none" stroke="#2d8cf0" stroke-width="1.500"/>
<path d="M17 13.300 19.200 15.500 17 17.700 14.800 15.500z" fill="#f5a623"/><path d="M19.200 15.500 21.400 13.300" stroke="#38c0a0" stroke-width="1.300"/><path d="M17 17.700 19.200 19.900" stroke="#e94e6a" stroke-width="1.300"/></svg>
<div class="abs" style="left:616.30px;top:493.5px;width:2px;height:2px;border-radius:1px;background:#0f1a3a"></div>
<svg class="abs" style="left:634.5px;top:463.2px" width="29" height="28.3" viewBox="0 0 29 28.3"><path d="M0.5 2Q0.5 0.5 2 0.5H27Q28.5 0.5 28.5 2V9H0.5z" fill="#3cb0ec"/>
<rect x="0.5" y="9" width="28" height="9.800" fill="#c83ed6"/>
<path d="M0.5 18.800H28.500V26.300Q28.500 27.800 27 27.800H2Q.5 27.800 .5 26.300z" fill="#5ac64a"/>
<rect x="3" y="2.500" width="1.200" height="4" fill="#e8e070"/><rect x="3" y="11.300" width="1.200" height="4" fill="#f0c0f0"/><rect x="3" y="21" width="1.200" height="4" fill="#c0f0a0"/>
<rect x="23" y="3" width="2.500" height="3" fill="#a8dcf8"/><rect x="23" y="12" width="2.500" height="3" fill="#e8a8f0"/><rect x="23" y="21.500" width="2.500" height="3" fill="#a8e8a0"/>
<path d="M14.500 5V26" stroke="#555" stroke-width="1" stroke-dasharray=".9 .7"/>
<rect x="13" y="2.200" width="3" height="4.500" rx="1.200" fill="#666" stroke="#ddd" stroke-width=".4"/></svg>
<div class="abs" style="left:648.00px;top:493.5px;width:2px;height:2px;border-radius:1px;background:#0f1a3a"></div>
<svg class="abs" style="left:680px;top:465px" width="28" height="26" viewBox="0 0 28 26"><rect x="0" y="4" width="28" height="16" fill="#fdfdfd" stroke="#d0d0d0" stroke-width=".4"/>
<path d="M2 6.500H9M2 8H7M2 11.500H12M2 13H10" stroke="#b0b0b0" stroke-width=".5"/>
<path d="M20 16H27.500V25H22z" fill="#f2f2f2" stroke="#ccc" stroke-width=".3"/>
<path d="M25.500 15.500 21.500 24" stroke="#555" stroke-width=".6"/></svg>
<svg class="abs" style="left:712px;top:465px" width="27" height="26" viewBox="0 0 27 26"><rect x="0" y="4" width="27" height="15.500" fill="#fdfdfd" stroke="#d0d0d0" stroke-width=".4"/>
<rect x="0.3" y="4.300" width="5" height="15" fill="#ebebeb"/>
<path d="M9 6.500H16M9 7.500H13" stroke="#b0b0b0" stroke-width=".4"/>
<rect x="17.700" y="16.500" width="9.300" height="9.300" rx="2" fill="#2a7ae8"/>
<path d="M25.500 16 19.800 25" stroke="#333" stroke-width="1.300"/></svg>
<svg class="abs" style="left:745.8px;top:464.5px" width="22" height="26" viewBox="0 0 22 26"><defs><linearGradient id="tr1" x1="0" y1="0" x2="1" y2="0"><stop offset="0" stop-color="#d8dce4"/><stop offset=".5" stop-color="#f4f6fa"/><stop offset="1" stop-color="#d0d4dc"/></linearGradient></defs>
<path d="M1 3.500 3.800 23Q4.200 25 6.500 25H15.500Q17.800 25 18.200 23L21 3.500z" fill="url(#tr1)" opacity=".95"/>
<ellipse cx="11" cy="3.500" rx="10" ry="2.200" fill="#eef0f4" stroke="#c4c8d0" stroke-width=".5"/></svg>
<div class="abs" style="left:235.3px;top:462.3px;width:10px;height:10px;border-radius:50%;background:#f0443a;color:#fff;font-size:6.5px;line-height:10px;text-align:center;font-family:Liberation Sans">2</div>
<div class="abs" style="left:564.2px;top:464.5px;width:.7px;height:27.5px;background:#4a6ed8"></div>
<div class="abs" style="left:671px;top:464.5px;width:.7px;height:27.5px;background:#4a6ed8"></div>
</div>

</body></html>
